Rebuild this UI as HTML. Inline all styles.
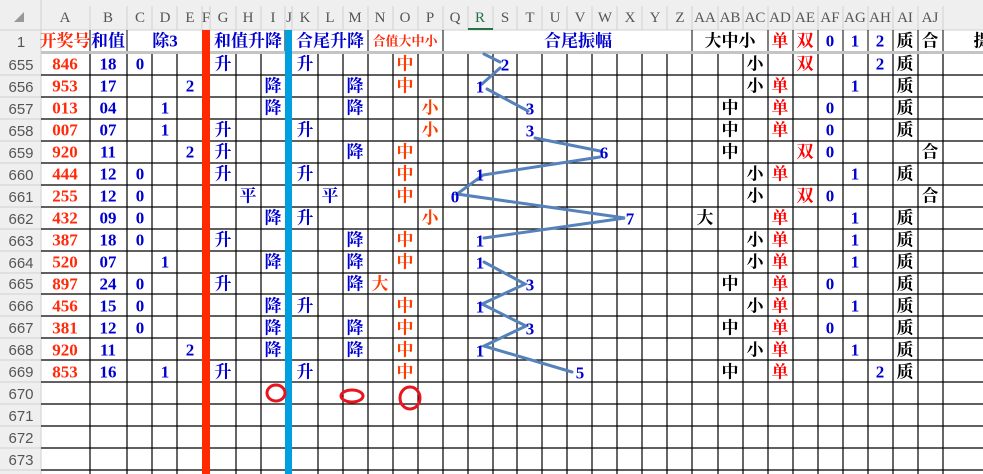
<!DOCTYPE html>
<html><head><meta charset="utf-8"><style>
html,body{margin:0;padding:0;background:#fff;}
svg{display:block;}
.ch{font-family:"Liberation Serif","Noto Serif CJK SC",serif;font-size:15px;fill:#555;text-anchor:middle;}
.rh{font-family:"Liberation Sans",sans-serif;font-size:15px;fill:#555;text-anchor:middle;}
.t{font-family:"Liberation Serif","Noto Serif CJK SC",serif;font-size:17px;font-weight:bold;text-anchor:middle;dominant-baseline:central;}
.r{fill:#ff2a0a;}.b{fill:#0000d0;}.o{fill:#ff3c00;}.k{fill:#000;}.rd{fill:#ff0000;}
.n{font-weight:bold;}
</style></head><body>
<svg width="983" height="474" viewBox="0 0 983 474" xmlns="http://www.w3.org/2000/svg">
<rect x="0" y="0" width="983" height="30" fill="#efefef"/>
<rect x="0" y="0" width="41" height="474" fill="#efefef"/>
<polygon points="14,22 24,22 24,12" fill="#999"/>
<g stroke="#d0d0d0" stroke-width="1">
<line x1="41" y1="0" x2="41" y2="474"/>
<line x1="90" y1="6" x2="90" y2="30"/><line x1="127" y1="6" x2="127" y2="30"/><line x1="152" y1="6" x2="152" y2="30"/><line x1="177" y1="6" x2="177" y2="30"/><line x1="202" y1="6" x2="202" y2="30"/><line x1="210" y1="6" x2="210" y2="30"/><line x1="236" y1="6" x2="236" y2="30"/><line x1="261" y1="6" x2="261" y2="30"/><line x1="285" y1="6" x2="285" y2="30"/><line x1="292" y1="6" x2="292" y2="30"/><line x1="318" y1="6" x2="318" y2="30"/><line x1="343" y1="6" x2="343" y2="30"/><line x1="368" y1="6" x2="368" y2="30"/><line x1="393" y1="6" x2="393" y2="30"/><line x1="418" y1="6" x2="418" y2="30"/><line x1="443" y1="6" x2="443" y2="30"/><line x1="468" y1="6" x2="468" y2="30"/><line x1="493" y1="6" x2="493" y2="30"/><line x1="517" y1="6" x2="517" y2="30"/><line x1="542" y1="6" x2="542" y2="30"/><line x1="567" y1="6" x2="567" y2="30"/><line x1="592" y1="6" x2="592" y2="30"/><line x1="617" y1="6" x2="617" y2="30"/><line x1="642" y1="6" x2="642" y2="30"/><line x1="667" y1="6" x2="667" y2="30"/><line x1="692" y1="6" x2="692" y2="30"/><line x1="718" y1="6" x2="718" y2="30"/><line x1="743" y1="6" x2="743" y2="30"/><line x1="768" y1="6" x2="768" y2="30"/><line x1="793" y1="6" x2="793" y2="30"/><line x1="818" y1="6" x2="818" y2="30"/><line x1="843" y1="6" x2="843" y2="30"/><line x1="868" y1="6" x2="868" y2="30"/><line x1="893" y1="6" x2="893" y2="30"/><line x1="918" y1="6" x2="918" y2="30"/><line x1="943" y1="6" x2="943" y2="30"/>
<line x1="0" y1="30" x2="983" y2="30"/>
<line x1="0" y1="75" x2="41" y2="75"/><line x1="0" y1="97" x2="41" y2="97"/><line x1="0" y1="119" x2="41" y2="119"/><line x1="0" y1="141" x2="41" y2="141"/><line x1="0" y1="163" x2="41" y2="163"/><line x1="0" y1="185" x2="41" y2="185"/><line x1="0" y1="207" x2="41" y2="207"/><line x1="0" y1="229" x2="41" y2="229"/><line x1="0" y1="251" x2="41" y2="251"/><line x1="0" y1="273" x2="41" y2="273"/><line x1="0" y1="294" x2="41" y2="294"/><line x1="0" y1="316" x2="41" y2="316"/><line x1="0" y1="338" x2="41" y2="338"/><line x1="0" y1="360" x2="41" y2="360"/><line x1="0" y1="382" x2="41" y2="382"/><line x1="0" y1="404" x2="41" y2="404"/><line x1="0" y1="426" x2="41" y2="426"/><line x1="0" y1="448" x2="41" y2="448"/><line x1="0" y1="470" x2="41" y2="470"/>
</g>
<rect x="468" y="28" width="25" height="2" fill="#217346"/>
<g class="ch">
<text x="65" y="22">A</text><text x="108" y="22">B</text><text x="140" y="22">C</text><text x="165" y="22">D</text><text x="190" y="22">E</text><text x="206" y="22">F</text><text x="223" y="22">G</text><text x="248" y="22">H</text><text x="273" y="22">I</text><text x="289" y="22">J</text><text x="305" y="22">K</text><text x="330" y="22">L</text><text x="355" y="22">M</text><text x="380" y="22">N</text><text x="405" y="22">O</text><text x="430" y="22">P</text><text x="455" y="22">Q</text><text x="480" y="22" fill="#217346">R</text><text x="505" y="22">S</text><text x="530" y="22">T</text><text x="555" y="22">U</text><text x="580" y="22">V</text><text x="605" y="22">W</text><text x="630" y="22">X</text><text x="655" y="22">Y</text><text x="680" y="22">Z</text><text x="705" y="22">AA</text><text x="730" y="22">AB</text><text x="755" y="22">AC</text><text x="780" y="22">AD</text><text x="805" y="22">AE</text><text x="830" y="22">AF</text><text x="855" y="22">AG</text><text x="880" y="22">AH</text><text x="905" y="22">AI</text><text x="930" y="22">AJ</text>
</g>
<g class="rh">
<text x="21" y="47">1</text>
<text x="21" y="70">655</text><text x="21" y="92">656</text><text x="21" y="114">657</text><text x="21" y="136">658</text><text x="21" y="158">659</text><text x="21" y="180">660</text><text x="21" y="202">661</text><text x="21" y="224">662</text><text x="21" y="246">663</text><text x="21" y="268">664</text><text x="21" y="289">665</text><text x="21" y="311">666</text><text x="21" y="333">667</text><text x="21" y="355">668</text><text x="21" y="377">669</text><text x="21" y="399">670</text><text x="21" y="421">671</text><text x="21" y="443">672</text><text x="21" y="465">673</text>
</g>
<g stroke="#000" stroke-width="1">
<line x1="90" y1="30" x2="90" y2="52"/><line x1="127" y1="30" x2="127" y2="52"/><line x1="285" y1="30" x2="285" y2="52"/><line x1="368" y1="30" x2="368" y2="52"/><line x1="443" y1="30" x2="443" y2="52"/><line x1="692" y1="30" x2="692" y2="52"/><line x1="768" y1="30" x2="768" y2="52"/><line x1="793" y1="30" x2="793" y2="52"/><line x1="818" y1="30" x2="818" y2="52"/><line x1="843" y1="30" x2="843" y2="52"/><line x1="868" y1="30" x2="868" y2="52"/><line x1="893" y1="30" x2="893" y2="52"/><line x1="918" y1="30" x2="918" y2="52"/><line x1="943" y1="30" x2="943" y2="52"/>
</g>
<rect x="41" y="51" width="942" height="3" fill="#c4c4c4"/>
<g stroke="#000" stroke-width="1.2">
<line x1="90" y1="54" x2="90" y2="474"/><line x1="127" y1="54" x2="127" y2="474"/><line x1="152" y1="54" x2="152" y2="474"/><line x1="177" y1="54" x2="177" y2="474"/><line x1="236" y1="54" x2="236" y2="474"/><line x1="261" y1="54" x2="261" y2="474"/><line x1="318" y1="54" x2="318" y2="474"/><line x1="343" y1="54" x2="343" y2="474"/><line x1="368" y1="54" x2="368" y2="474"/><line x1="393" y1="54" x2="393" y2="474"/><line x1="418" y1="54" x2="418" y2="474"/><line x1="443" y1="54" x2="443" y2="474"/><line x1="468" y1="54" x2="468" y2="474"/><line x1="493" y1="54" x2="493" y2="474"/><line x1="517" y1="54" x2="517" y2="474"/><line x1="542" y1="54" x2="542" y2="474"/><line x1="567" y1="54" x2="567" y2="474"/><line x1="592" y1="54" x2="592" y2="474"/><line x1="617" y1="54" x2="617" y2="474"/><line x1="642" y1="54" x2="642" y2="474"/><line x1="667" y1="54" x2="667" y2="474"/><line x1="692" y1="54" x2="692" y2="474"/><line x1="718" y1="54" x2="718" y2="474"/><line x1="743" y1="54" x2="743" y2="474"/><line x1="768" y1="54" x2="768" y2="474"/><line x1="793" y1="54" x2="793" y2="474"/><line x1="818" y1="54" x2="818" y2="474"/><line x1="843" y1="54" x2="843" y2="474"/><line x1="868" y1="54" x2="868" y2="474"/><line x1="893" y1="54" x2="893" y2="474"/><line x1="918" y1="54" x2="918" y2="474"/><line x1="943" y1="54" x2="943" y2="474"/>
<line x1="41" y1="75" x2="983" y2="75"/><line x1="41" y1="97" x2="983" y2="97"/><line x1="41" y1="119" x2="983" y2="119"/><line x1="41" y1="141" x2="983" y2="141"/><line x1="41" y1="163" x2="983" y2="163"/><line x1="41" y1="185" x2="983" y2="185"/><line x1="41" y1="207" x2="983" y2="207"/><line x1="41" y1="229" x2="983" y2="229"/><line x1="41" y1="251" x2="983" y2="251"/><line x1="41" y1="273" x2="983" y2="273"/><line x1="41" y1="294" x2="983" y2="294"/><line x1="41" y1="316" x2="983" y2="316"/><line x1="41" y1="338" x2="983" y2="338"/><line x1="41" y1="360" x2="983" y2="360"/><line x1="41" y1="382" x2="983" y2="382"/><line x1="41" y1="404" x2="983" y2="404"/><line x1="41" y1="426" x2="983" y2="426"/><line x1="41" y1="448" x2="983" y2="448"/><line x1="41" y1="470" x2="983" y2="470"/>
</g>
<rect x="202" y="30" width="8" height="444" fill="#ff2a00"/>
<rect x="285" y="30" width="7" height="444" fill="#00a0e0"/>
<g stroke="#5582bb" stroke-width="3" fill="none" stroke-linecap="round">
<line x1="484" y1="54" x2="500" y2="62"/>
<polyline points="500,68 482,84"/>
<polyline points="487,89 528,111"/>
<polyline points="535,138 600,151"/>
<polyline points="600,157 483,175 457,194 625,218 484,238"/>
<polyline points="484,262 525,284 482,304 526,326 484,346 572,372"/>
</g>
<g class="t">
<text x="65" y="41" class="r">开奖号</text>
<text x="108" y="41" class="b">和值</text>
<text x="165" y="41" class="b">除3</text>
<text x="248" y="41" class="b">和值升降</text>
<text x="330" y="41" class="b">合尾升降</text>
<text x="405" y="41" class="r" style="font-size:13px">合值大中小</text>
<text x="578" y="41" class="b">合尾振幅</text>
<text x="730" y="41" class="k">大中小</text>
<text x="780" y="41" class="rd">单</text><text x="805" y="41" class="rd">双</text>
<text x="830" y="41" class="b">0</text><text x="855" y="41" class="b">1</text><text x="880" y="41" class="b">2</text>
<text x="905" y="41" class="k">质</text><text x="930" y="41" class="k">合</text>
<text x="982" y="41" class="k">提</text>
</g>
<g class="t">
<text x="65" y="64" class="r">846</text><text x="108" y="64" class="b">18</text><text x="140" y="64" class="b">0</text><text x="223" y="64" class="b n">升</text><text x="305" y="64" class="b n">升</text><text x="405" y="64" class="o n">中</text><text x="505" y="65" class="b n">2</text><text x="755" y="64" class="k n">小</text><text x="805" y="64" class="rd n">双</text><text x="880" y="64" class="b">2</text><text x="905" y="64" class="k n">质</text>
<text x="65" y="86" class="r">953</text><text x="108" y="86" class="b">17</text><text x="190" y="86" class="b">2</text><text x="273" y="86" class="b">降</text><text x="355" y="86" class="b">降</text><text x="405" y="86" class="o n">中</text><text x="480" y="87" class="b n">1</text><text x="755" y="86" class="k n">小</text><text x="780" y="86" class="rd n">单</text><text x="855" y="86" class="b n">1</text><text x="905" y="86" class="k n">质</text>
<text x="65" y="108" class="r">013</text><text x="108" y="108" class="b">04</text><text x="165" y="108" class="b">1</text><text x="273" y="108" class="b">降</text><text x="355" y="108" class="b">降</text><text x="430" y="108" class="o n">小</text><text x="530" y="109" class="b n">3</text><text x="730" y="108" class="k n">中</text><text x="780" y="108" class="rd n">单</text><text x="830" y="108" class="b">0</text><text x="905" y="108" class="k n">质</text>
<text x="65" y="130" class="r">007</text><text x="108" y="130" class="b">07</text><text x="165" y="130" class="b">1</text><text x="223" y="130" class="b n">升</text><text x="305" y="130" class="b n">升</text><text x="430" y="130" class="o n">小</text><text x="530" y="131" class="b n">3</text><text x="730" y="130" class="k n">中</text><text x="780" y="130" class="rd n">单</text><text x="830" y="130" class="b">0</text><text x="905" y="130" class="k n">质</text>
<text x="65" y="152" class="r">920</text><text x="108" y="152" class="b">11</text><text x="190" y="152" class="b">2</text><text x="223" y="152" class="b n">升</text><text x="355" y="152" class="b">降</text><text x="405" y="152" class="o n">中</text><text x="604" y="153" class="b n">6</text><text x="730" y="152" class="k n">中</text><text x="805" y="152" class="rd n">双</text><text x="830" y="152" class="b">0</text><text x="930" y="152" class="k n">合</text>
<text x="65" y="174" class="r">444</text><text x="108" y="174" class="b">12</text><text x="140" y="174" class="b">0</text><text x="223" y="174" class="b n">升</text><text x="305" y="174" class="b n">升</text><text x="405" y="174" class="o n">中</text><text x="480" y="175" class="b n">1</text><text x="755" y="174" class="k n">小</text><text x="780" y="174" class="rd n">单</text><text x="855" y="174" class="b n">1</text><text x="905" y="174" class="k n">质</text>
<text x="65" y="196" class="r">255</text><text x="108" y="196" class="b">12</text><text x="140" y="196" class="b">0</text><text x="248" y="196" class="b n">平</text><text x="330" y="196" class="b n">平</text><text x="405" y="196" class="o n">中</text><text x="455" y="197" class="b">0</text><text x="755" y="196" class="k n">小</text><text x="805" y="196" class="rd n">双</text><text x="830" y="196" class="b">0</text><text x="930" y="196" class="k n">合</text>
<text x="65" y="218" class="r">432</text><text x="108" y="218" class="b">09</text><text x="140" y="218" class="b">0</text><text x="273" y="218" class="b">降</text><text x="305" y="218" class="b n">升</text><text x="430" y="218" class="o n">小</text><text x="630" y="219" class="b n">7</text><text x="705" y="218" class="k n">大</text><text x="780" y="218" class="rd n">单</text><text x="855" y="218" class="b n">1</text><text x="905" y="218" class="k n">质</text>
<text x="65" y="240" class="r">387</text><text x="108" y="240" class="b">18</text><text x="140" y="240" class="b">0</text><text x="223" y="240" class="b n">升</text><text x="355" y="240" class="b">降</text><text x="405" y="240" class="o n">中</text><text x="480" y="241" class="b n">1</text><text x="755" y="240" class="k n">小</text><text x="780" y="240" class="rd n">单</text><text x="855" y="240" class="b n">1</text><text x="905" y="240" class="k n">质</text>
<text x="65" y="262" class="r">520</text><text x="108" y="262" class="b">07</text><text x="165" y="262" class="b">1</text><text x="273" y="262" class="b">降</text><text x="355" y="262" class="b">降</text><text x="405" y="262" class="o n">中</text><text x="480" y="263" class="b n">1</text><text x="755" y="262" class="k n">小</text><text x="780" y="262" class="rd n">单</text><text x="855" y="262" class="b n">1</text><text x="905" y="262" class="k n">质</text>
<text x="65" y="284" class="r">897</text><text x="108" y="284" class="b">24</text><text x="140" y="284" class="b">0</text><text x="223" y="284" class="b n">升</text><text x="355" y="284" class="b">降</text><text x="380" y="284" class="o n">大</text><text x="530" y="285" class="b n">3</text><text x="730" y="284" class="k n">中</text><text x="780" y="284" class="rd n">单</text><text x="830" y="284" class="b">0</text><text x="905" y="284" class="k n">质</text>
<text x="65" y="306" class="r">456</text><text x="108" y="306" class="b">15</text><text x="140" y="306" class="b">0</text><text x="273" y="306" class="b">降</text><text x="305" y="306" class="b n">升</text><text x="405" y="306" class="o n">中</text><text x="480" y="307" class="b n">1</text><text x="755" y="306" class="k n">小</text><text x="780" y="306" class="rd n">单</text><text x="855" y="306" class="b n">1</text><text x="905" y="306" class="k n">质</text>
<text x="65" y="328" class="r">381</text><text x="108" y="328" class="b">12</text><text x="140" y="328" class="b">0</text><text x="273" y="328" class="b">降</text><text x="355" y="328" class="b">降</text><text x="405" y="328" class="o n">中</text><text x="530" y="329" class="b n">3</text><text x="730" y="328" class="k n">中</text><text x="780" y="328" class="rd n">单</text><text x="830" y="328" class="b">0</text><text x="905" y="328" class="k n">质</text>
<text x="65" y="350" class="r">920</text><text x="108" y="350" class="b">11</text><text x="190" y="350" class="b">2</text><text x="273" y="350" class="b">降</text><text x="355" y="350" class="b">降</text><text x="405" y="350" class="o n">中</text><text x="480" y="351" class="b n">1</text><text x="755" y="350" class="k n">小</text><text x="780" y="350" class="rd n">单</text><text x="855" y="350" class="b n">1</text><text x="905" y="350" class="k n">质</text>
<text x="65" y="372" class="r">853</text><text x="108" y="372" class="b">16</text><text x="165" y="372" class="b">1</text><text x="223" y="372" class="b n">升</text><text x="305" y="372" class="b n">升</text><text x="405" y="372" class="o n">中</text><text x="580" y="373" class="b n">5</text><text x="730" y="372" class="k n">中</text><text x="780" y="372" class="rd n">单</text><text x="880" y="372" class="b">2</text><text x="905" y="372" class="k n">质</text>
</g>
<g stroke="#e8141e" stroke-width="3" fill="none">
<ellipse cx="276" cy="393" rx="9" ry="8"/>
<ellipse cx="352" cy="396" rx="11" ry="6"/>
<ellipse cx="410" cy="398" rx="10" ry="11"/>
</g>
</svg>
</body></html>
